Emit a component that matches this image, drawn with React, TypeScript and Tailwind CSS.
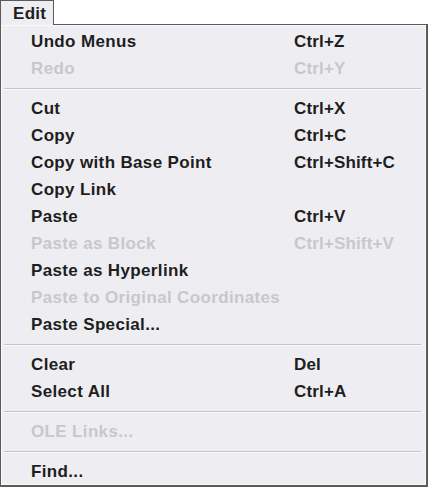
import React from "react";

type Item =
  | { type: "sep" }
  | { type: "item"; label: string; shortcut?: string; disabled?: boolean };

const items: Item[] = [
  { type: "item", label: "Undo Menus", shortcut: "Ctrl+Z" },
  { type: "item", label: "Redo", shortcut: "Ctrl+Y", disabled: true },
  { type: "sep" },
  { type: "item", label: "Cut", shortcut: "Ctrl+X" },
  { type: "item", label: "Copy", shortcut: "Ctrl+C" },
  { type: "item", label: "Copy with Base Point", shortcut: "Ctrl+Shift+C" },
  { type: "item", label: "Copy Link" },
  { type: "item", label: "Paste", shortcut: "Ctrl+V" },
  { type: "item", label: "Paste as Block", shortcut: "Ctrl+Shift+V", disabled: true },
  { type: "item", label: "Paste as Hyperlink" },
  { type: "item", label: "Paste to Original Coordinates", disabled: true },
  { type: "item", label: "Paste Special..." },
  { type: "sep" },
  { type: "item", label: "Clear", shortcut: "Del" },
  { type: "item", label: "Select All", shortcut: "Ctrl+A" },
  { type: "sep" },
  { type: "item", label: "OLE Links...", disabled: true },
  { type: "sep" },
  { type: "item", label: "Find..." },
];

export default function App() {
  return (
    <div
      className="w-[430px] h-[487px] bg-white overflow-hidden text-[17px] font-bold"
      style={{ fontFamily: '"Liberation Sans", Arial, sans-serif' }}
    >
      <div className="relative z-10 w-[54px] h-[25px] -mb-px border-l border-t border-r border-[#5a5a5a] bg-[#eeeef2] flex items-center pl-[12px] pt-[1px] text-[#1e1e1e] leading-none tracking-[0.3px]">
        Edit
      </div>
      <div className="w-[428px] h-[463px] border-l border-t border-r-2 border-b-2 border-[#5a5a5a] bg-[#eeeef2]">
        <div className="h-full border border-[#fafafc] pt-[2px]">
          {items.map((it, i) =>
            it.type === "sep" ? (
              <div key={i} className="h-[13px] flex flex-col justify-center mx-[2px] mr-[4px]">
                <div className="h-px bg-[#c4c4c8]" />
                <div className="h-px bg-[#fbfbfd]" />
              </div>
            ) : (
              <div
                key={i}
                className={`h-[27px] grid grid-cols-[263px_1fr] items-center pl-[29px] leading-[27px] whitespace-nowrap ${
                  it.disabled ? "text-[#c8c8ca]" : "text-[#1e1e1e]"
                }`}
              >
                <span className="tracking-[0.35px]">{it.label}</span>
                <span className="tracking-[0.15px]">{it.shortcut ?? ""}</span>
              </div>
            )
          )}
        </div>
      </div>
    </div>
  );
}
